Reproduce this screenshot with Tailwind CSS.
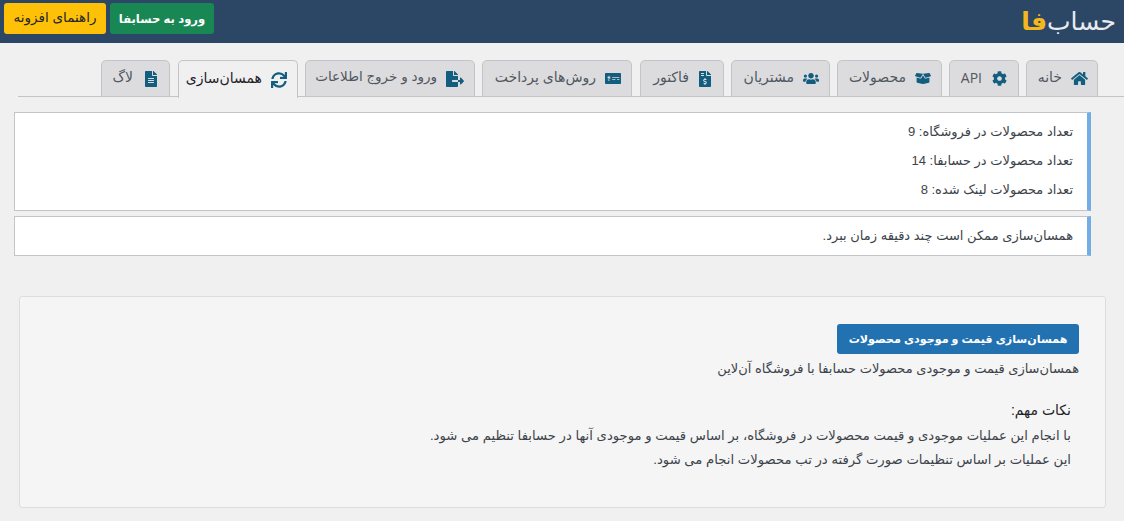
<!DOCTYPE html>
<html lang="fa" dir="rtl">
<head>
    <meta charset="UTF-8">
    <title>حسابفا</title>
    <script src="https://cdn.jsdelivr.net/npm/@tailwindcss/browser@4"></script>
</head>
<body class="h-[521px] overflow-hidden bg-[#f0f0f1] text-[#3c434a] text-[13px] font-['Liberation_Sans','DejaVu_Sans',sans-serif]">

    <!-- Header -->
    <header class="h-[43px] bg-[#2c4666] flex items-start justify-between pt-[3px] pr-[8px] pl-[4px]">
        <div class="h-[36px] flex items-center text-[25px] leading-none text-[#e8ebee]" dir="rtl">حساب<span class="text-[#f5b81c] font-bold">فا</span></div>
        <div class="flex gap-[4px]">
            <a class="h-[31px] w-[104px] flex items-center justify-center rounded-[3px] bg-[#198754] text-white font-bold text-[11.6px] whitespace-nowrap">ورود به حسابفا</a>
            <a class="h-[31px] w-[102px] flex items-center justify-center rounded-[3px] bg-[#ffc107] text-[#212529] text-[13.5px] whitespace-nowrap">راهنمای افزونه</a>
        </div>
    </header>

    <!-- Tabs -->
    <nav class="mt-[17px] ml-[18px] h-[37px] border-b border-[#c3c4c7] flex gap-[7px] pr-[26px] text-[14px] whitespace-nowrap">
        <a class="w-[72px] h-[37px] shrink-0 flex items-center gap-[9px] pr-[9px] border border-[#c3c4c7] rounded-t-[5px] bg-[#dcdcde] text-[#50575e]">
            <svg class="w-[17px] h-[15px] fill-[#135e7f] shrink-0" viewBox="0 0 576 512"><path d="M280.37 148.26L96 300.11V464a16 16 0 0 0 16 16l112.06-.29a16 16 0 0 0 15.92-16V368a16 16 0 0 1 16-16h64a16 16 0 0 1 16 16v95.64a16 16 0 0 0 16 16.05L464 480a16 16 0 0 0 16-16V300L295.67 148.26a12.19 12.19 0 0 0-15.3 0zM571.6 251.47L488 182.56V44.05a12 12 0 0 0-12-12h-56a12 12 0 0 0-12 12v72.61L318.47 43a48 48 0 0 0-61 0L4.34 251.47a12 12 0 0 0-1.6 16.9l25.5 31A12 12 0 0 0 45.15 301l235.22-193.74a12.19 12.19 0 0 1 15.3 0L530.9 301a12 12 0 0 0 16.9-1.6l25.5-31a12 12 0 0 0-1.7-16.93z"/></svg>
            <span class="-mt-[3px]">خانه</span>
        </a>
        <a class="w-[70px] h-[37px] shrink-0 flex items-center gap-[10px] pr-[11px] border border-[#c3c4c7] rounded-t-[5px] bg-[#dcdcde] text-[#50575e]">
            <svg class="w-[15px] h-[15px] fill-[#135e7f] shrink-0" viewBox="0 0 512 512"><path d="M487.4 315.7l-42.6-24.6c4.3-23.2 4.3-47 0-70.2l42.6-24.6c4.9-2.8 7.1-8.6 5.5-14-11.1-35.6-30-67.8-54.7-94.6-3.8-4.1-10-5.1-14.8-2.3L380.8 110c-17.9-15.4-38.5-27.3-60.8-35.1V25.8c0-5.6-3.9-10.5-9.4-11.7-36.7-8.2-74.3-7.8-109.2 0-5.5 1.2-9.4 6.1-9.4 11.7V75c-22.2 7.9-42.8 19.8-60.8 35.1L88.7 85.5c-4.9-2.8-11-1.9-14.8 2.3-24.7 26.7-43.6 58.9-54.7 94.6-1.7 5.4.6 11.2 5.5 14L67.3 221c-4.3 23.2-4.3 47 0 70.2l-42.6 24.6c-4.9 2.8-7.1 8.6-5.5 14 11.1 35.6 30 67.8 54.7 94.6 3.8 4.1 10 5.1 14.8 2.3l42.6-24.6c17.9 15.4 38.5 27.3 60.8 35.1v49.2c0 5.6 3.9 10.5 9.4 11.7 36.7 8.2 74.3 7.8 109.2 0 5.5-1.2 9.4-6.1 9.4-11.7v-49.2c22.2-7.9 42.8-19.8 60.8-35.1l42.6 24.6c4.9 2.8 11 1.9 14.8-2.3 24.7-26.7 43.6-58.9 54.7-94.6 1.5-5.5-.7-11.3-5.6-14.1zM256 336c-44.1 0-80-35.9-80-80s35.9-80 80-80 80 35.9 80 80-35.9 80-80 80z"/></svg>
            <span class="-mt-[3px] font-['Open_Sans',sans-serif]">API</span>
        </a>
        <a class="w-[105px] h-[37px] shrink-0 flex items-center gap-[9px] pr-[10px] border border-[#c3c4c7] rounded-t-[5px] bg-[#dcdcde] text-[#50575e]">
            <svg class="w-[16px] h-[13px] fill-[#135e7f] shrink-0" viewBox="0 0 640 512"><path d="M425.7 256c-16.9 0-32.8-9-41.4-23.4L320 126l-64.2 106.6c-8.7 14.5-24.6 23.5-41.5 23.5-4.5 0-9-.6-13.3-1.9L64 215v178c0 14.7 10 27.5 24.2 31l216.2 54.1c10.2 2.5 20.9 2.5 31 0L551.8 424c14.2-3.6 24.2-16.4 24.2-31V215l-137 39.1c-4.3 1.3-8.8 1.9-13.3 1.9zm212.6-112.2L586.8 41c-3.1-6.2-9.8-9.8-16.7-8.9L320 64l91.7 152.1c3.8 6.3 11.4 9.3 18.5 7.3l197.9-56.5c9.9-2.9 14.7-13.9 10.2-23.1zM53.2 41L1.7 143.8c-4.6 9.2.3 20.2 10.1 23l197.9 56.5c7.1 2 14.7-1 18.5-7.3L320 64 69.8 32.1c-6.9-.8-13.5 2.7-16.6 8.9z"/></svg>
            <span class="-mt-[3px]">محصولات</span>
        </a>
        <a class="w-[99px] h-[37px] shrink-0 flex items-center gap-[9px] pr-[10px] border border-[#c3c4c7] rounded-t-[5px] bg-[#dcdcde] text-[#50575e]">
            <svg class="w-[16px] h-[13px] fill-[#135e7f] shrink-0" viewBox="0 0 640 512"><path d="M96 224c35.3 0 64-28.7 64-64s-28.7-64-64-64-64 28.7-64 64 28.7 64 64 64zm448 0c35.3 0 64-28.7 64-64s-28.7-64-64-64-64 28.7-64 64 28.7 64 64 64zm32 32h-64c-17.6 0-33.5 7.1-45.1 18.6 40.3 22.1 68.9 62 75.1 109.4h66c17.7 0 32-14.3 32-32v-32c0-35.3-28.7-64-64-64zm-256 0c61.9 0 112-50.1 112-112S381.9 32 320 32 208 82.1 208 144s50.1 112 112 112zm76.8 32h-8.3c-20.8 10-43.9 16-68.5 16s-47.6-6-68.5-16h-8.3C179.6 288 128 339.6 128 403.2V432c0 26.5 21.5 48 48 48h288c26.5 0 48-21.5 48-48v-28.8c0-63.6-51.6-115.2-115.2-115.2zm-223.7-13.4C161.5 263.1 145.6 256 128 256H64c-35.3 0-64 28.7-64 64v32c0 17.7 14.3 32 32 32h65.9c6.3-47.4 34.9-87.3 75.2-109.4z"/></svg>
            <span class="-mt-[3px]">مشتریان</span>
        </a>
        <a class="w-[84px] h-[37px] shrink-0 flex items-center gap-[10px] pr-[12px] border border-[#c3c4c7] rounded-t-[5px] bg-[#dcdcde] text-[#50575e]">
            <svg class="w-[12px] h-[16px] fill-[#135e7f] shrink-0" viewBox="0 0 384 512"><path d="M377 105L279.1 7c-4.5-4.5-10.6-7-17-7H256v128h128v-6.1c0-6.3-2.5-12.4-7-16.9zm-153 31V0H24C10.7 0 0 10.7 0 24v464c0 13.3 10.7 24 24 24h336c13.3 0 24-10.7 24-24V160H248c-13.2 0-24-10.8-24-24zM64 72c0-4.4 3.6-8 8-8h80c4.4 0 8 3.6 8 8v16c0 4.4-3.6 8-8 8H72c-4.4 0-8-3.6-8-8V72zm0 80v-16c0-4.4 3.6-8 8-8h80c4.4 0 8 3.6 8 8v16c0 4.4-3.6 8-8 8H72c-4.4 0-8-3.6-8-8zm144 263.9V440c0 4.4-3.6 8-8 8h-16c-4.4 0-8-3.6-8-8v-24.3c-11.3-.6-22.3-4.5-31.4-11.4-3.9-2.9-4.1-8.8-.6-12.1l11.8-11.2c2.8-2.6 6.9-2.8 10.2-.7 3.9 2.4 8.3 3.7 12.8 3.7h28.1c6.5 0 11.8-5.9 11.8-13.2 0-6-3.6-11.2-8.8-12.7l-45-13.5c-18.6-5.6-31.6-23.4-31.6-43.4 0-24.5 19.1-44.4 42.7-45.1V232c0-4.4 3.6-8 8-8h16c4.4 0 8 3.6 8 8v24.3c11.3.6 22.3 4.5 31.4 11.4 3.9 2.9 4.1 8.8.6 12.1l-11.8 11.2c-2.8 2.6-6.9 2.8-10.2.7-3.9-2.4-8.3-3.7-12.8-3.7h-28.1c-6.5 0-11.8 5.9-11.8 13.2 0 6 3.6 11.2 8.8 12.7l45 13.5c18.6 5.6 31.6 23.4 31.6 43.4 0 24.5-19 44.4-42.7 45.1z"/></svg>
            <span class="-mt-[3px]">فاکتور</span>
        </a>
        <a class="w-[150px] h-[37px] mr-px shrink-0 flex items-center gap-[9px] pr-[10px] border border-[#c3c4c7] rounded-t-[5px] bg-[#dcdcde] text-[#50575e]">
            <svg class="w-[16px] h-[13px] fill-[#135e7f] shrink-0" viewBox="0 0 640 512"><path d="M608 32H32C14.33 32 0 46.33 0 64v384c0 17.67 14.33 32 32 32h576c17.67 0 32-14.33 32-32V64c0-17.67-14.33-32-32-32zM176 327.88V344c0 4.42-3.58 8-8 8h-16c-4.42 0-8-3.58-8-8v-16.29c-11.29-.58-22.27-4.52-31.37-11.35-3.9-2.93-4.1-8.77-.57-12.14l11.75-11.21c2.77-2.64 6.89-2.76 10.13-.73 3.87 2.42 8.26 3.72 12.82 3.72h28.11c6.5 0 11.8-5.92 11.8-13.19 0-5.95-3.61-11.19-8.77-12.73l-45-13.5c-18.59-5.58-31.58-23.42-31.58-43.39 0-24.52 19.05-44.44 42.67-45.07V152c0-4.42 3.58-8 8-8h16c4.42 0 8 3.58 8 8v16.29c11.29.58 22.27 4.51 31.37 11.35 3.9 2.93 4.1 8.77.57 12.14l-11.75 11.21c-2.77 2.64-6.89 2.76-10.13.73-3.87-2.43-8.26-3.72-12.82-3.72h-28.11c-6.5 0-11.8-5.92-11.8-13.19 0-5.95 3.61-11.19 8.77-12.73l45 13.5c18.59 5.58 31.58 23.42 31.58 43.39 0 24.53-19.05 44.44-42.67 45.07zM416 312c0 4.42-3.58 8-8 8H296c-4.42 0-8-3.58-8-8v-16c0-4.42 3.58-8 8-8h112c4.42 0 8 3.58 8 8v16zm160 0c0 4.42-3.58 8-8 8h-80c-4.42 0-8-3.58-8-8v-16c0-4.42 3.58-8 8-8h80c4.42 0 8 3.58 8 8v16zm0-96c0 4.42-3.58 8-8 8H296c-4.42 0-8-3.58-8-8v-16c0-4.42 3.58-8 8-8h272c4.42 0 8 3.58 8 8v16z"/></svg>
            <span class="-mt-[3px]">روش‌های پرداخت</span>
        </a>
        <a class="w-[170px] h-[37px] shrink-0 flex items-center gap-[9px] pr-[10px] border border-[#c3c4c7] rounded-t-[5px] bg-[#dcdcde] text-[#50575e]">
            <svg class="w-[18px] h-[16px] fill-[#135e7f] shrink-0" viewBox="0 0 576 512"><path d="M384 121.9c0-6.3-2.5-12.4-7-16.9L279.1 7c-4.5-4.5-10.6-7-17-7H256v128h128zM571 308l-95.7-96.4c-10.1-10.1-27.4-3-27.4 11.3V288h-64v64h64v65.2c0 14.3 17.3 21.4 27.4 11.3L571 332c6.6-6.7 6.6-17.4 0-24zm-379 28v-32c0-8.8 7.2-16 16-16h176V160H248c-13.2 0-24-10.8-24-24V0H24C10.7 0 0 10.7 0 24v464c0 13.3 10.7 24 24 24h336c13.3 0 24-10.7 24-24V352H208c-8.8 0-16-7.2-16-16z"/></svg>
            <span class="-mt-[3px] text-[13.5px]">ورود و خروج اطلاعات</span>
        </a>
        <a class="w-[120px] h-[38px] shrink-0 flex items-center gap-[9px] pr-[10px] border border-b-0 border-[#c3c4c7] rounded-t-[5px] bg-[#f0f0f1] text-[#1d2327]">
            <svg class="w-[16px] h-[16px] fill-[#135e7f] shrink-0" viewBox="0 0 512 512"><path d="M440.65 12.57l4 82.77A247.16 247.16 0 0 0 255.83 8C134.73 8 33.91 94.92 12.29 209.82A12 12 0 0 0 24.09 224h49.05a12 12 0 0 0 11.67-9.26 175.91 175.91 0 0 1 317-56.94l-101.46-4.86a12 12 0 0 0-12.57 12v47.41a12 12 0 0 0 12 12H500a12 12 0 0 0 12-12V12a12 12 0 0 0-12-12h-47.37a12 12 0 0 0-11.98 12.57zM255.83 432a175.61 175.61 0 0 1-146-77.8l101.8 4.87a12 12 0 0 0 12.57-12v-47.4a12 12 0 0 0-12-12H12a12 12 0 0 0-12 12V500a12 12 0 0 0 12 12h47.35a12 12 0 0 0 12-12.6l-4.15-82.57A247.17 247.17 0 0 0 255.83 504c121.11 0 221.93-86.92 243.55-201.82a12 12 0 0 0-11.8-14.18h-49.05a12 12 0 0 0-11.67 9.26A175.86 175.86 0 0 1 255.83 432z"/></svg>
            <span class="-mt-[3px]">همسان‌سازی</span>
        </a>
        <a class="w-[69px] h-[37px] mr-px shrink-0 flex items-center gap-[12px] pr-[12px] border border-[#c3c4c7] rounded-t-[5px] bg-[#dcdcde] text-[#50575e]">
            <svg class="w-[12px] h-[16px] fill-[#135e7f] shrink-0" viewBox="0 0 384 512"><path d="M224 136V0H24C10.7 0 0 10.7 0 24v464c0 13.3 10.7 24 24 24h336c13.3 0 24-10.7 24-24V160H248c-13.2 0-24-10.8-24-24zm64 236c0 6.6-5.4 12-12 12H108c-6.6 0-12-5.4-12-12v-8c0-6.6 5.4-12 12-12h168c6.6 0 12 5.4 12 12v8zm0-64c0 6.6-5.4 12-12 12H108c-6.6 0-12-5.4-12-12v-8c0-6.6 5.4-12 12-12h168c6.6 0 12 5.4 12 12v8zm0-72v8c0 6.6-5.4 12-12 12H108c-6.6 0-12-5.4-12-12v-8c0-6.6 5.4-12 12-12h168c6.6 0 12 5.4 12 12zm96-114.1v6.1H256V0h6.1c6.4 0 12.5 2.5 17 7l97.9 98c4.5 4.5 7 10.6 7 16.9z"/></svg>
            <span class="-mt-[3px]">لاگ</span>
        </a>
    </nav>

    <!-- Notices -->
    <section class="mt-[15px] mr-[33px] ml-[14px] flex flex-col gap-[5px]">
        <div class="h-[99px] bg-white border border-[#c3c4c7] border-r-4 border-r-[#72aee6] pr-[14px] pt-[4px] flex flex-col">
            <p class="h-[29px] flex items-center">تعداد محصولات در فروشگاه: 9</p>
            <p class="h-[30px] flex items-center">تعداد محصولات در حسابفا: 14</p>
            <p class="h-[28px] flex items-center">تعداد محصولات لینک شده: 8</p>
        </div>
        <div class="h-[40px] bg-white border border-[#c3c4c7] border-r-4 border-r-[#72aee6] pr-[14px] flex items-center">
            <p>همسان‌سازی ممکن است چند دقیقه زمان ببرد.</p>
        </div>
    </section>

    <!-- Sync panel -->
    <section class="mt-[40px] mr-[18px] ml-[19px] h-[212px] bg-[#f5f5f5] border border-[#dddddd] rounded-[3px] pr-[26px] pt-[27px]">
        <a class="w-[242px] h-[30px] flex items-center justify-center rounded-[3px] bg-[#2271b1] text-white font-bold text-[11.1px] whitespace-nowrap">همسان‌سازی قیمت و موجودی محصولات</a>
        <p class="mt-[6px] h-[18px] flex items-center">همسان‌سازی قیمت و موجودی محصولات حسابفا با فروشگاه آن‌لاین</p>
        <div class="mt-[23px] pr-[8px] text-[13.2px]">
            <p class="h-[18px] flex items-center text-[14px] text-[#1d2327]">نکات مهم:</p>
            <p class="mt-[8px] h-[18px] flex items-center">با انجام این عملیات موجودی و قیمت محصولات در فروشگاه، بر اساس قیمت و موجودی آنها در حسابفا تنظیم می شود.</p>
            <p class="mt-[6px] h-[18px] flex items-center">این عملیات بر اساس تنظیمات صورت گرفته در تب محصولات انجام می شود.</p>
        </div>
    </section>

</body>
</html>
